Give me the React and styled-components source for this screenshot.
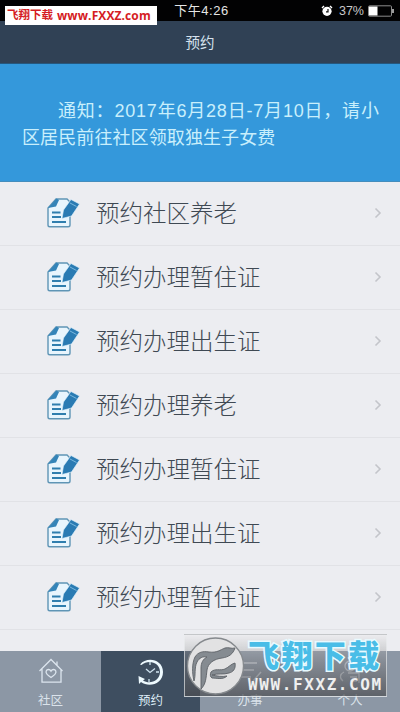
import React from "react";
import styled, { createGlobalStyle } from "styled-components";

const rows = [
  "预约社区养老",
  "预约办理暂住证",
  "预约办理出生证",
  "预约办理养老",
  "预约办理暂住证",
  "预约办理出生证",
  "预约办理暂住证",
];

const tabs = [
  { label: "社区", icon: HouseIcon },
  { label: "预约", icon: ClockIcon, active: true },
  { label: "办事", icon: ListIcon },
  { label: "个人", icon: PersonIcon },
];

function HouseIcon() {
  return (
    <svg width="26" height="26" viewBox="0 0 26 26" fill="none" stroke="#dce5ee" strokeWidth="1.3">
      <path d="M1.500 13 13 1.500 24.500 13M4 11v13.200h19V11M19 3.500v4" />
      <path d="M13 19.500c-4-2.500-5.500-4.500-4.800-6.500.8-2 3.600-2 4.800.1 1.200-2.100 4-2.100 4.800-.1.700 2-.8 4-4.800 6.500z" />
    </svg>
  );
}

function ClockIcon() {
  return (
    <svg width="28" height="28" viewBox="0 0 28 28">
      <path
        d="M3 6.500C10-2 26 1.500 26 14c0 12-14 16-22 10l-2 2-.5-8 6.500 3-2 1.500C13 27 23 22.500 23 14 23 4 11 1 4.500 7z"
        fill="#eefaff"
      />
      <path d="m9 11 4 3.500 5-4M13 4v3M19 14h3M12 21v3" fill="none" stroke="#cfe3ef" strokeWidth="1.300" />
    </svg>
  );
}

function ListIcon() {
  return (
    <svg width="26" height="28" viewBox="0 0 26 28" fill="none" stroke="#d5dce3" strokeWidth="1.500">
      <path d="M2 5h18M2 12h15M2 19h12M16 23l8-9" />
    </svg>
  );
}

function PersonIcon() {
  return (
    <svg width="26" height="28" viewBox="0 0 26 28" fill="none" stroke="#d5dce3" strokeWidth="1.300">
      <circle cx="13" cy="8" r="5" />
      <path d="M7 14c-4 2-5 6-1 9M11 15h11v10M13 19h7M13 23h7" />
    </svg>
  );
}

function DocumentIcon() {
  return (
    <svg width="34" height="32" viewBox="0 0 34 32">
      <path
        d="M10 2h11l3 3v23q0 1.800-1.800 1.800H3.800Q2 29.800 2 28V11z"
        fill="#e8f5fd"
        stroke="#5f95b5"
        strokeWidth="1.400"
      />
      <path d="m2 11 8.500-9.500L13 3l-3 6.500z" fill="#3484b8" />
      <path d="M6 15.500h8.500M6 20h9M6 25h14" stroke="#2f7eae" strokeWidth="2" />
      <path d="m16 21.500 1.500-8.500L25 2.500 33.500 7l-8 12z" fill="#2a7bb3" stroke="#e3f5ff" strokeWidth=".6" />
      <path d="m24 6 6.500 3.500" stroke="#8dc6e8" strokeWidth=".8" />
    </svg>
  );
}

function AlarmIcon() {
  return (
    <svg width="12" height="12" viewBox="0 0 12 12">
      <circle cx="6" cy="6.300" r="4.600" fill="#fff" />
      <path d="M1 3 3 1M9 1l2 2" stroke="#fff" strokeWidth="1.400" />
      <path d="M7 4v2.800H5" fill="none" stroke="#111" strokeWidth="1.200" />
    </svg>
  );
}

function BatteryIcon() {
  return (
    <svg width="27" height="12" viewBox="0 0 27 12">
      <rect x=".5" y=".8" width="23" height="10.400" rx="1" fill="none" stroke="#8c8c8c" />
      <rect x="1" y="1.500" width="8.500" height="9" fill="#fff" />
      <path d="M25 4v4" stroke="#9c9c9c" strokeWidth="2" />
    </svg>
  );
}

function BirdLogo() {
  return (
    <svg width="59" height="60" viewBox="0 0 59 60">
      <circle cx="29.500" cy="30" r="28" fill="#e2e2e3" stroke="#85898d" strokeWidth="1.300" />
      <g fill="#858b91" stroke="#5c6167" strokeWidth=".9">
        <path d="M15 53V32c0-5 2-9 6-11-4-1-8 1-10 5-3 6-1 13-3 19-2-8-2-18 1-24 3-5 8-6 14-5 8 1 11-2 16-4 4-1 6 1 10 0-2 6-6 9-13 10-8 1-14 5-15 12-1 8-1 14-6 19z" />
        <path d="M25 36c4-4 9-1 14-3 4-2 6-5 10-6 1 6-2 9-6 10-6 2-11 0-17 2 5 1 10 2 15 1-4 4-10 2-15 2-2-1-2-4-1-6z" />
      </g>
    </svg>
  );
}

function App() {
  return (
    <Screen>
      <GlobalStyle />
      <StatusBar>
        <Time>下午4:26</Time>
        <StatusIcons>
          <AlarmIcon />
          <span>37%</span>
          <BatteryIcon />
        </StatusIcons>
        <SiteLabel>
          <SiteName>飞翔下载</SiteName>
          <SiteUrl>www.FXXZ.com</SiteUrl>
        </SiteLabel>
      </StatusBar>
      <Header>预约</Header>
      <Notice>
        <NoticeLead>通知：2017年6月28日-7月10日，请小</NoticeLead>
        区居民前往社区领取独生子女费
      </Notice>
      <List>
        {rows.map((row, index) => (
          <Row key={index}>
            <DocumentIcon />
            <RowTitle>{row}</RowTitle>
            <Chevron viewBox="0 0 8 12">
              <path d="m1.500 1.500 4.500 4.500-4.500 4.500" />
            </Chevron>
          </Row>
        ))}
      </List>
      <TabBar>
        {tabs.map(({ label, icon: Icon, active }) => (
          <Tab key={label} $active={active}>
            <Icon />
            <span>{label}</span>
          </Tab>
        ))}
      </TabBar>
      <Watermark>
        <BirdLogo />
        <WatermarkText>
          <WatermarkName>飞翔下载</WatermarkName>
          <WatermarkUrl>WWW.FXXZ.COM</WatermarkUrl>
        </WatermarkText>
      </Watermark>
    </Screen>
  );
}

export default App;

const GlobalStyle = createGlobalStyle`
  * {
    box-sizing: border-box;
  }
  body, p {
    margin: 0;
  }
  svg {
    display: block;
    flex-shrink: 0;
  }
`;

const Screen = styled.div`
  position: relative;
  display: flex;
  flex-direction: column;
  width: 400px;
  height: 712px;
  overflow: hidden;
  background-color: #ecedf1;
  font-family: "Liberation Sans", "Noto Sans CJK SC", sans-serif;
`;

const StatusBar = styled.div`
  position: relative;
  display: flex;
  align-items: center;
  justify-content: flex-end;
  height: 21px;
  padding-right: 5px;
  background-color: #020203;
  color: #e5e5e5;
`;

const Time = styled.div`
  position: absolute;
  top: 0;
  left: 0;
  width: 100%;
  padding-left: 3px;
  font-size: 13px;
  line-height: 22px;
  letter-spacing: 0.5px;
  text-align: center;
`;

const StatusIcons = styled.div`
  display: flex;
  align-items: center;
  gap: 4px;
  padding-top: 1px;
  color: #c9c9c9;
  font-size: 12.5px;
  span {
    margin-left: 2px;
  }
`;

const SiteLabel = styled.div`
  position: absolute;
  z-index: 1;
  top: 6px;
  left: 5px;
  display: flex;
  align-items: center;
  gap: 4px;
  width: 152px;
  height: 19px;
  padding-left: 2px;
  background-color: #fff;
  color: #d51c24;
  line-height: 19px;
  white-space: nowrap;
`;

const SiteName = styled.span`
  font-size: 11.5px;
  font-weight: bold;
`;

const SiteUrl = styled.span`
  font-family: "Open Sans", sans-serif;
  font-size: 12px;
  font-weight: bold;
  letter-spacing: 0.1px;
`;

const Header = styled.div`
  height: 43px;
  background-color: #304155;
  border-bottom: 1px solid #26577d;
  color: #d5e1ed;
  font-size: 14.5px;
  line-height: 45px;
  text-align: center;
`;

const Notice = styled.p`
  height: 118px;
  padding: 34px 10px 0 22px;
  background-color: #3498db;
  border-bottom: 1px solid #448dbd;
  color: #c9effc;
  font-size: 18px;
  line-height: 27px;
  letter-spacing: 0.1px;
`;

const NoticeLead = styled.span`
  display: block;
  padding-left: 36px;
  letter-spacing: 0.8px;
  white-space: nowrap;
`;

const List = styled.div`
  flex: 1;
`;

const Row = styled.div`
  display: flex;
  align-items: center;
  height: 64px;
  padding: 0 18px 1px 46px;
  border-bottom: 1px solid #e1e2e6;
`;

const RowTitle = styled.span`
  flex: 1;
  margin-left: 16px;
  padding-bottom: 3px;
  color: #3f4953;
  font-family: "Noto Sans CJK SC", sans-serif;
  font-size: 23.5px;
  font-weight: 300;
  line-height: 34px;
`;

const Chevron = styled.svg`
  width: 8px;
  height: 12px;
  fill: none;
  stroke: #c3c5ca;
  stroke-width: 1.6;
`;

const TabBar = styled.div`
  display: grid;
  grid-template-columns: 101px 99px 100px 100px;
  height: 61px;
`;

const Tab = styled.div`
  display: flex;
  flex-direction: column;
  align-items: center;
  justify-content: space-between;
  padding: 7px 0 3px;
  background-color: ${({ $active }) => ($active ? "#3e4e60" : "#8c97a5")};
  color: ${({ $active }) => ($active ? "#dceaf5" : "#dbe3eb")};
  font-size: 12.5px;
  line-height: 16px;
`;

const Watermark = styled.div`
  position: absolute;
  top: 634px;
  left: 184px;
  display: flex;
  align-items: center;
  width: 203px;
  height: 63px;
  padding-left: 1px;
  border: 1px solid rgba(235, 238, 240, 0.65);
  background: linear-gradient(rgba(235, 235, 235, 0.35), rgba(140, 140, 142, 0.4) 35%, rgba(75, 76, 80, 0.7));
`;

const WatermarkText = styled.div`
  display: flex;
  flex-direction: column;
  gap: 3px;
  margin-left: 3px;
  white-space: nowrap;
`;

const WatermarkName = styled.span`
  color: #49bde7;
  font-size: 31px;
  font-weight: 900;
  letter-spacing: 2.4px;
  line-height: 35px;
  -webkit-text-stroke: 3px #e8faff;
  paint-order: stroke fill;
`;

const WatermarkUrl = styled.span`
  color: #efefef;
  font-family: "DejaVu Sans Mono", monospace;
  font-size: 16px;
  font-weight: bold;
  letter-spacing: 1.6px;
  line-height: 16px;
`;
